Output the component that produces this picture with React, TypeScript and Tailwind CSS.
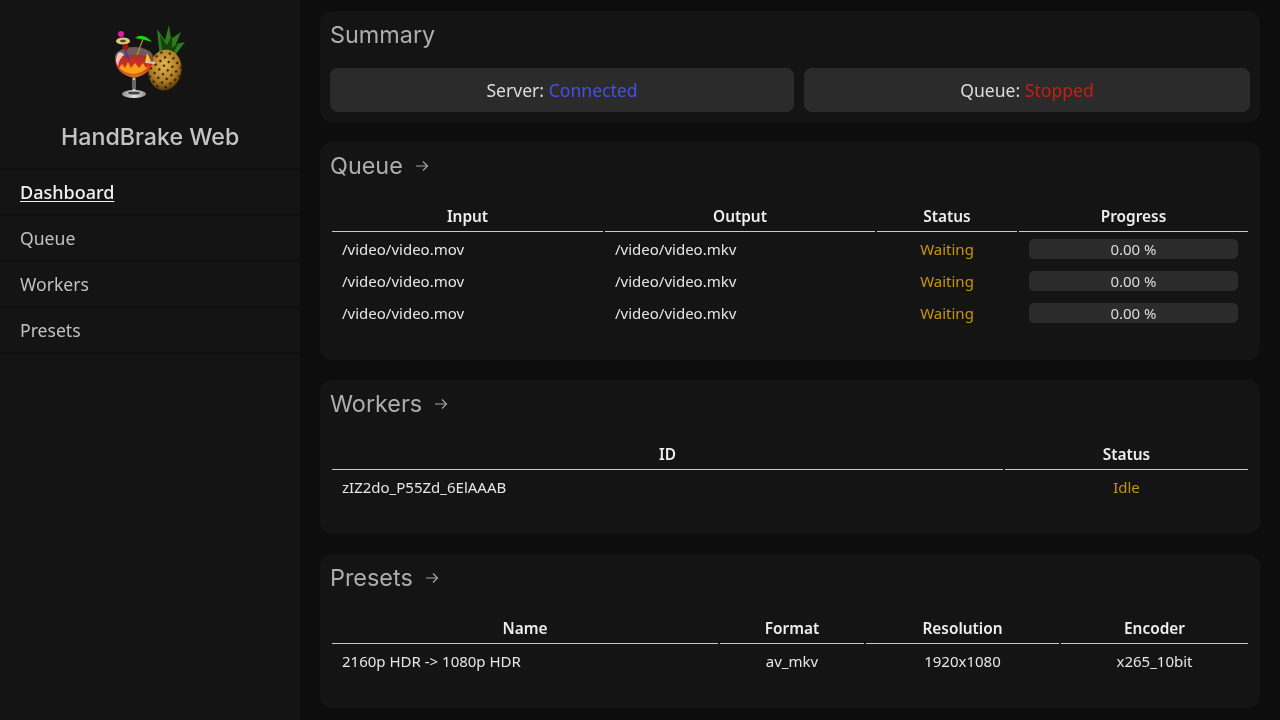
const navItems = ["Dashboard", "Queue", "Workers", "Presets"]

const queueRows = [0, 1, 2]

function Logo() {
  return (
    <svg width="80" height="80" viewBox="0 0 80 80">
      <defs>
        <radialGradient id="pine" cx="45%" cy="38%" r="65%">
          <stop offset="0%" stopColor="#e6b650" />
          <stop offset="65%" stopColor="#ad7a22" />
          <stop offset="100%" stopColor="#4e3208" />
        </radialGradient>
        <linearGradient id="drink" x1="0" y1="0" x2="0" y2="1">
          <stop offset="0%" stopColor="#a8302a" />
          <stop offset="55%" stopColor="#d8301c" />
          <stop offset="100%" stopColor="#c9821e" />
        </linearGradient>
        <linearGradient id="foot" x1="0" y1="0" x2="1" y2="0">
          <stop offset="0%" stopColor="#8a8a8a" />
          <stop offset="50%" stopColor="#e4e4e4" />
          <stop offset="100%" stopColor="#8a8a8a" />
        </linearGradient>
        <pattern id="dots" width="6" height="6" patternUnits="userSpaceOnUse" patternTransform="rotate(42)">
          <circle cx="3" cy="3" r="1.2" fill="#2a1a05" />
        </pattern>
      </defs>
      {/* pineapple leaves */}
      <path d="M50 36 L47 7 L55 18 L59 3 L61 17 L71 10 L66 22 L75 20 L66 32 L62 40 Z" fill="#2f7a1c" />
      <path d="M53 36 L50 13 L57 23 L62 13 L62 26 L69 20 L60 38 Z" fill="#15450e" />
      {/* pineapple body */}
      <ellipse cx="55" cy="48" rx="16.5" ry="20.5" transform="rotate(10 55 48)" fill="url(#pine)" />
      <ellipse cx="55" cy="48" rx="16.5" ry="20.5" transform="rotate(10 55 48)" fill="url(#dots)" />
      {/* glass */}
      <ellipse cx="24" cy="35" rx="19" ry="10" fill="#6e5a5a" />
      <path d="M5 36 Q5 52 24 56 Q43 52 43 36 Q24 29 5 36 Z" fill="url(#drink)" />
      <path d="M9 46 L12 42 L15 46 L18 40 L21 46 L25 41 L29 46 L33 41 L36 46 L40 43 Q34 51 24 52 Q14 51 9 46 Z" fill="#f7a01c" />
      <path d="M8 31 Q4 38 8 44 Q9 37 14 33 Q12 29 8 31 Z" fill="#f0c4bc" />
      <path d="M37 31 L41 39 L35 41 Z" fill="#ecd032" />
      <path d="M36 40 L45 41" stroke="#cfcfc8" strokeWidth="2" />
      {/* umbrella */}
      <path d="M33 17 L27 33" stroke="#b89a22" strokeWidth="1.2" />
      <path d="M25 16 Q33 10 42 20 Q33 17 25 16 Z" fill="#12d80e" />
      {/* garnish */}
      <path d="M15 27 L19 38" stroke="#2a3fb8" strokeWidth="1.5" />
      <circle cx="11" cy="12" r="3" fill="#e81ca0" />
      <ellipse cx="13" cy="19" rx="7" ry="3.6" fill="#d8c878" />
      <ellipse cx="13" cy="19" rx="3" ry="1.3" fill="#4c4630" />
      <circle cx="15.5" cy="25" r="3" fill="#a31616" />
      {/* stem and foot */}
      <path d="M24 56 L24 69" stroke="#c0c0c0" strokeWidth="3" />
      <path d="M24 58 L24 67" stroke="#2a2a2a" strokeWidth="1.2" />
      <ellipse cx="24" cy="72" rx="12" ry="4" fill="url(#foot)" />
      <ellipse cx="24" cy="71" rx="6" ry="1.6" fill="#444444" />
    </svg>
  )
}

function Arrow() {
  return (
    <svg width="14" height="14" viewBox="0 0 14 14" fill="none" stroke="#a3a3a3" strokeWidth="1.2" className="mb-[1px] ml-[12px]">
      <path d="M1 7 H12.5 M8 2.5 L12.5 7 L8 11.5" />
    </svg>
  )
}

function Heading({ title, arrow }: { title: string; arrow?: boolean }) {
  return (
    <div className="flex h-[28px] items-center font-['Inter',sans-serif] text-[23.4px] text-[#adadad]">
      {title}
      {arrow && <Arrow />}
    </div>
  )
}

function Th({ children }: { children: string }) {
  return <th className="h-[29px] border-b border-[#c9c9c9] p-0 text-center text-[15.4px] font-semibold leading-[20px] text-[#eeeeee]">{children}</th>
}

export default function App() {
  return (
    <div className="flex h-[720px] w-[1280px] overflow-hidden bg-[#0d0d0d] font-['Noto_Sans',sans-serif] text-[15px] text-[#e6e6e6]">
      <aside className="flex w-[300px] shrink-0 flex-col bg-[#141414]">
        <div className="flex h-[168px] flex-col items-center pt-[22px]">
          <Logo />
          <h1 className="mt-[21px] will-change-transform font-['Inter',sans-serif] text-[23.2px] font-medium leading-[29px] text-[#c4c4c4]">HandBrake Web</h1>
        </div>
        <nav className="flex flex-col border-b-2 border-b-[#0f0f0f]">
          {navItems.map((item, i) => (
            <div key={item} className="flex h-[46px] items-center border-t-2 border-t-[#0f0f0f] px-[20px] pt-[1px] text-[17.6px]">
              <span className={i === 0 ? "text-[18px] font-medium text-[#f2f2f2] underline underline-offset-2 will-change-transform" : "text-[#c0c0c0] will-change-transform"}>{item}</span>
            </div>
          ))}
        </nav>
      </aside>

      <main className="flex flex-1 flex-col gap-[20px] pl-[20px] pr-[20px] pt-[11px] will-change-transform">
        <section className="h-[111px] rounded-[12px] bg-[#141414] px-[10px] pt-[10px]">
          <Heading title="Summary" />
          <div className="mt-[19px] flex gap-[10px] text-[17.6px]">
            <div className="flex h-[44px] w-[464px] items-center justify-center rounded-[8px] bg-[#2b2b2b] text-[#dcdcdc]">
              <span>Server: <span className="text-[#4450e8]">Connected</span></span>
            </div>
            <div className="flex h-[44px] flex-1 items-center justify-center rounded-[8px] bg-[#2b2b2b] text-[#dcdcdc]">
              <span>Queue: <span className="text-[#c81e10]">Stopped</span></span>
            </div>
          </div>
        </section>

        <section className="h-[218px] rounded-[12px] bg-[#141414] px-[10px] pt-[10px]">
          <Heading title="Queue" arrow />
          <table className="mt-[21px] w-full table-fixed border-separate border-spacing-[2px]">
            <colgroup>
              <col className="w-[271px]" />
              <col className="w-[270px]" />
              <col className="w-[140px]" />
              <col />
            </colgroup>
            <thead>
              <tr>
                <Th>Input</Th>
                <Th>Output</Th>
                <Th>Status</Th>
                <Th>Progress</Th>
              </tr>
            </thead>
            <tbody>
              {queueRows.map((row) => (
                <tr key={row} className="h-[30px]">
                  <td className="px-[10px]">/video/video.mov</td>
                  <td className="px-[10px]">/video/video.mkv</td>
                  <td className="text-center text-[#c89600]">Waiting</td>
                  <td className="px-[10px]">
                    <div className="flex h-[20px] items-center justify-center rounded-[5px] bg-[#2b2b2b] text-[#dcdcdc]">0.00 %</div>
                  </td>
                </tr>
              ))}
            </tbody>
          </table>
        </section>

        <section className="h-[154px] rounded-[12px] bg-[#141414] px-[10px] pt-[10px]">
          <Heading title="Workers" arrow />
          <table className="mt-[21px] w-full table-fixed border-separate border-spacing-[2px]">
            <colgroup>
              <col className="w-[671px]" />
              <col />
            </colgroup>
            <thead>
              <tr>
                <Th>ID</Th>
                <Th>Status</Th>
              </tr>
            </thead>
            <tbody>
              <tr className="h-[30px]">
                <td className="px-[10px]">zIZ2do_P55Zd_6ElAAAB</td>
                <td className="text-center text-[#c89600]">Idle</td>
              </tr>
            </tbody>
          </table>
        </section>

        <section className="h-[154px] rounded-[12px] bg-[#141414] px-[10px] pt-[10px]">
          <Heading title="Presets" arrow />
          <table className="mt-[21px] w-full table-fixed border-separate border-spacing-[2px]">
            <colgroup>
              <col className="w-[386px]" />
              <col className="w-[144px]" />
              <col className="w-[193px]" />
              <col />
            </colgroup>
            <thead>
              <tr>
                <Th>Name</Th>
                <Th>Format</Th>
                <Th>Resolution</Th>
                <Th>Encoder</Th>
              </tr>
            </thead>
            <tbody>
              <tr className="h-[30px]">
                <td className="px-[10px]">2160p HDR -&gt; 1080p HDR</td>
                <td className="text-center">av_mkv</td>
                <td className="text-center">1920x1080</td>
                <td className="text-center">x265_10bit</td>
              </tr>
            </tbody>
          </table>
        </section>
      </main>
    </div>
  )
}
